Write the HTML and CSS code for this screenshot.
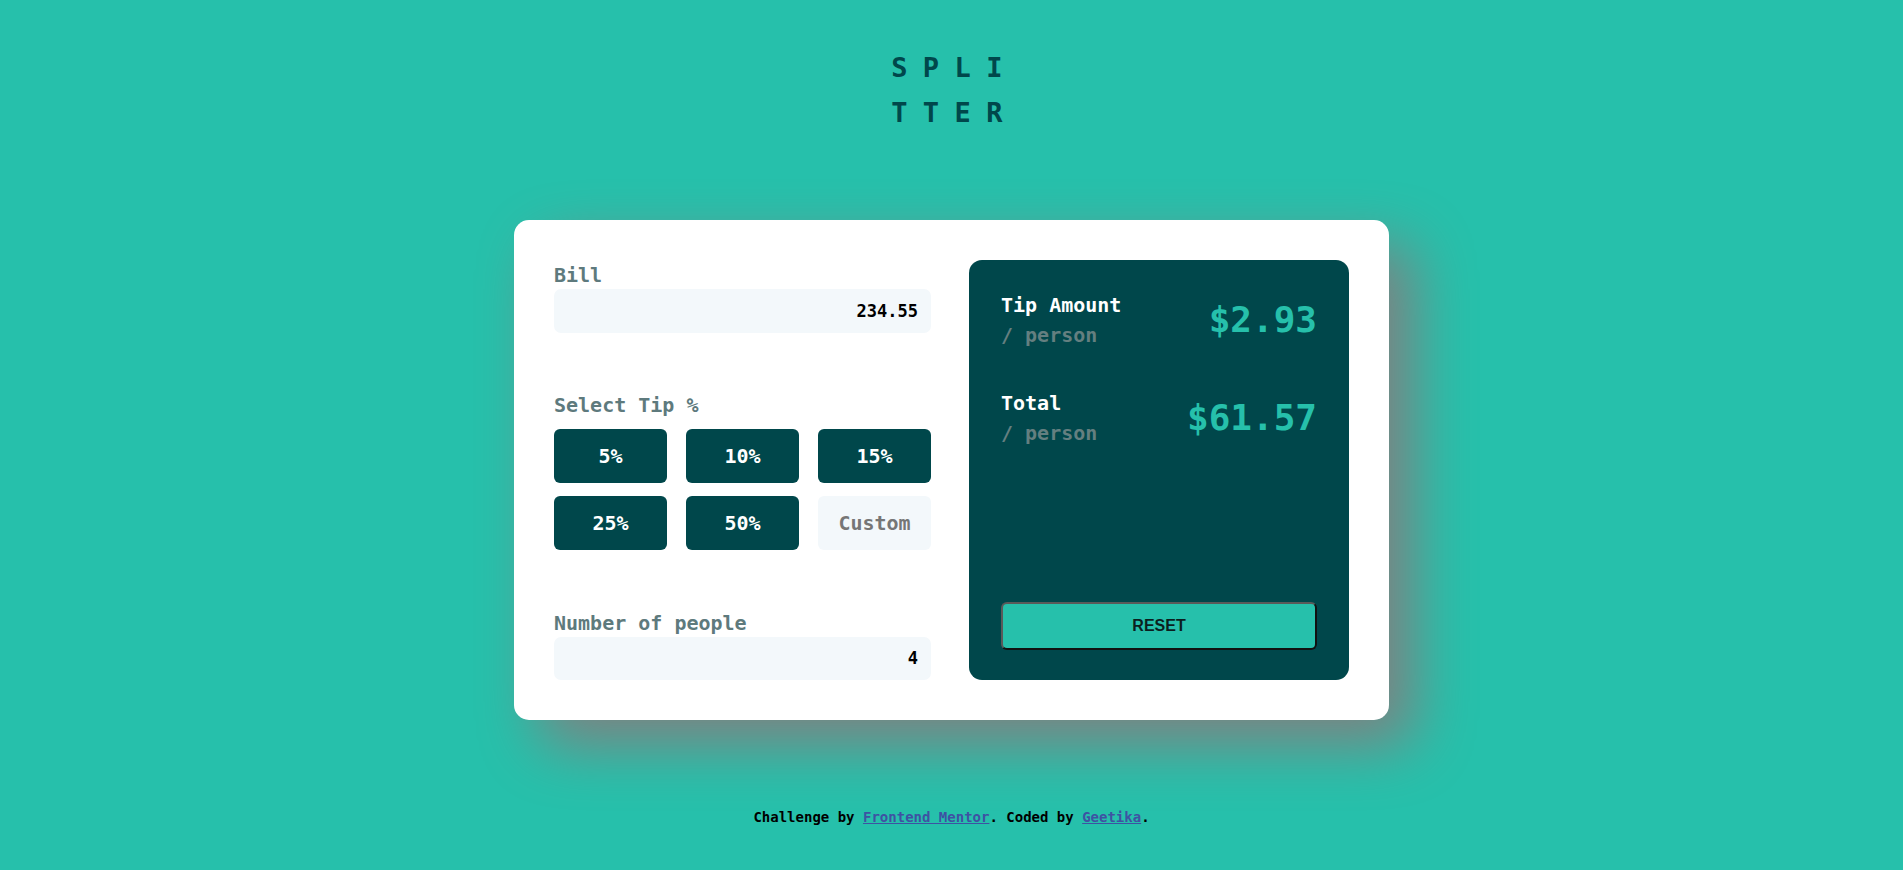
FILE: index.html
```html
<!DOCTYPE html>
<html lang="en">
<head>
<meta charset="utf-8">
<title>Splitter</title>
<link rel="stylesheet" href="styles.css">
</head>
<body>
<header class="logo">
  <span class="logo-line">SPLI</span>
  <span class="logo-line">TTER</span>
</header>
<main class="card">
  <section class="inputs">
    <label class="label label-bill" for="bill">Bill</label>
    <input class="field" id="bill" type="text" value="234.55">
    <p class="label label-tip">Select Tip %</p>
    <div class="tips">
      <button class="tip">5%</button>
      <button class="tip">10%</button>
      <button class="tip">15%</button>
      <button class="tip">25%</button>
      <button class="tip">50%</button>
      <input class="tip-custom" type="text" placeholder="Custom">
    </div>
    <label class="label label-people" for="people">Number of people</label>
    <input class="field" id="people" type="text" value="4">
  </section>
  <section class="result">
    <div class="rows">
      <div class="row">
        <div class="row-text">
          <div class="row-title">Tip Amount</div>
          <div class="row-sub">/ person</div>
        </div>
        <div class="row-value">$2.93</div>
      </div>
      <div class="row row-total">
        <div class="row-text">
          <div class="row-title">Total</div>
          <div class="row-sub">/ person</div>
        </div>
        <div class="row-value">$61.57</div>
      </div>
    </div>
    <button class="reset">RESET</button>
  </section>
</main>
<footer class="attribution">
  Challenge by <a href="#">Frontend Mentor</a>. Coded by <a href="#">Geetika</a>.
</footer>
</body>
</html>
```

FILE: styles.css
```css
* {
  box-sizing: border-box;
}

html, body {
  margin: 0;
  padding: 0;
}

body {
  background: #26c0ab;
  font-family: "DejaVu Sans Mono", "Liberation Mono", monospace;
  font-weight: bold;
  min-height: 870px;
  display: flex;
  flex-direction: column;
  align-items: center;
}

.logo {
  margin-top: 45px;
  padding-left: 6px;
  display: flex;
  flex-direction: column;
  align-items: center;
  color: #00474b;
  font-size: 27px;
  line-height: 45px;
  letter-spacing: 15.4px;
}

.logo-line {
  display: block;
}

.card {
  margin-top: 85px;
  width: 875px;
  height: 500px;
  background: #fff;
  border-radius: 15px;
  padding: 40px;
  display: flex;
  gap: 38px;
  box-shadow: 25px 25px 60px #808080;
}

.inputs {
  width: 377px;
  display: flex;
  flex-direction: column;
}

.label {
  margin: 0;
  font-size: 20px;
  line-height: 24px;
  color: #5e7a7d;
}

.label-bill {
  margin-top: 3px;
  margin-bottom: 2px;
}

.label-tip {
  margin-top: 60px;
  margin-bottom: 12px;
}

.label-people {
  margin-top: 61px;
  margin-bottom: 2px;
}

.field {
  height: 44px;
  width: 100%;
  border: none;
  outline: none;
  border-radius: 7px;
  background: #f3f8fb;
  text-align: right;
  padding: 0 13px 0 13px;
  font-family: inherit;
  font-weight: bold;
  font-size: 17px;
  color: #000;
}

.tips {
  display: grid;
  grid-template-columns: repeat(3, 1fr);
  grid-auto-rows: 54px;
  column-gap: 19px;
  row-gap: 13px;
}

.tip {
  border: none;
  border-radius: 6px;
  background: #00474b;
  color: #fff;
  font-family: inherit;
  font-weight: bold;
  font-size: 20px;
  padding: 0;
}

.tip-custom {
  border: none;
  outline: none;
  border-radius: 6px;
  background: #f3f8fb;
  font-family: inherit;
  font-weight: bold;
  font-size: 20px;
  text-align: center;
  width: 100%;
  min-width: 0;
  padding: 0;
}

.tip-custom::placeholder {
  color: #767676;
  opacity: 1;
}

.result {
  flex: 1;
  background: #00474b;
  border-radius: 13px;
  padding: 30px 32px 30px 32px;
  display: flex;
  flex-direction: column;
  justify-content: space-between;
}

.rows {
  display: flex;
  flex-direction: column;
  gap: 38px;
}

.row {
  display: flex;
  justify-content: space-between;
  align-items: center;
}

.row-title {
  color: #fff;
  font-size: 20px;
  line-height: 30px;
}

.row-sub {
  color: #647f80;
  font-size: 20px;
  line-height: 30px;
}

.row-value {
  color: #26c0ab;
  font-size: 36px;
  line-height: 40px;
}

.reset {
  height: 48px;
  width: 100%;
  background: #26c0ab;
  border: 2px solid;
  border-color: #5a5a5a #111 #111 #5a5a5a;
  border-radius: 6px;
  font-family: "Liberation Sans", Arial, sans-serif;
  font-weight: bold;
  font-size: 16px;
  color: #0b1f1f;
  padding: 0;
}

.attribution {
  margin-top: 87px;
  font-size: 14px;
  line-height: 20px;
  color: #000;
  text-align: center;
}

.attribution a {
  color: #3e52a3;
}
```
